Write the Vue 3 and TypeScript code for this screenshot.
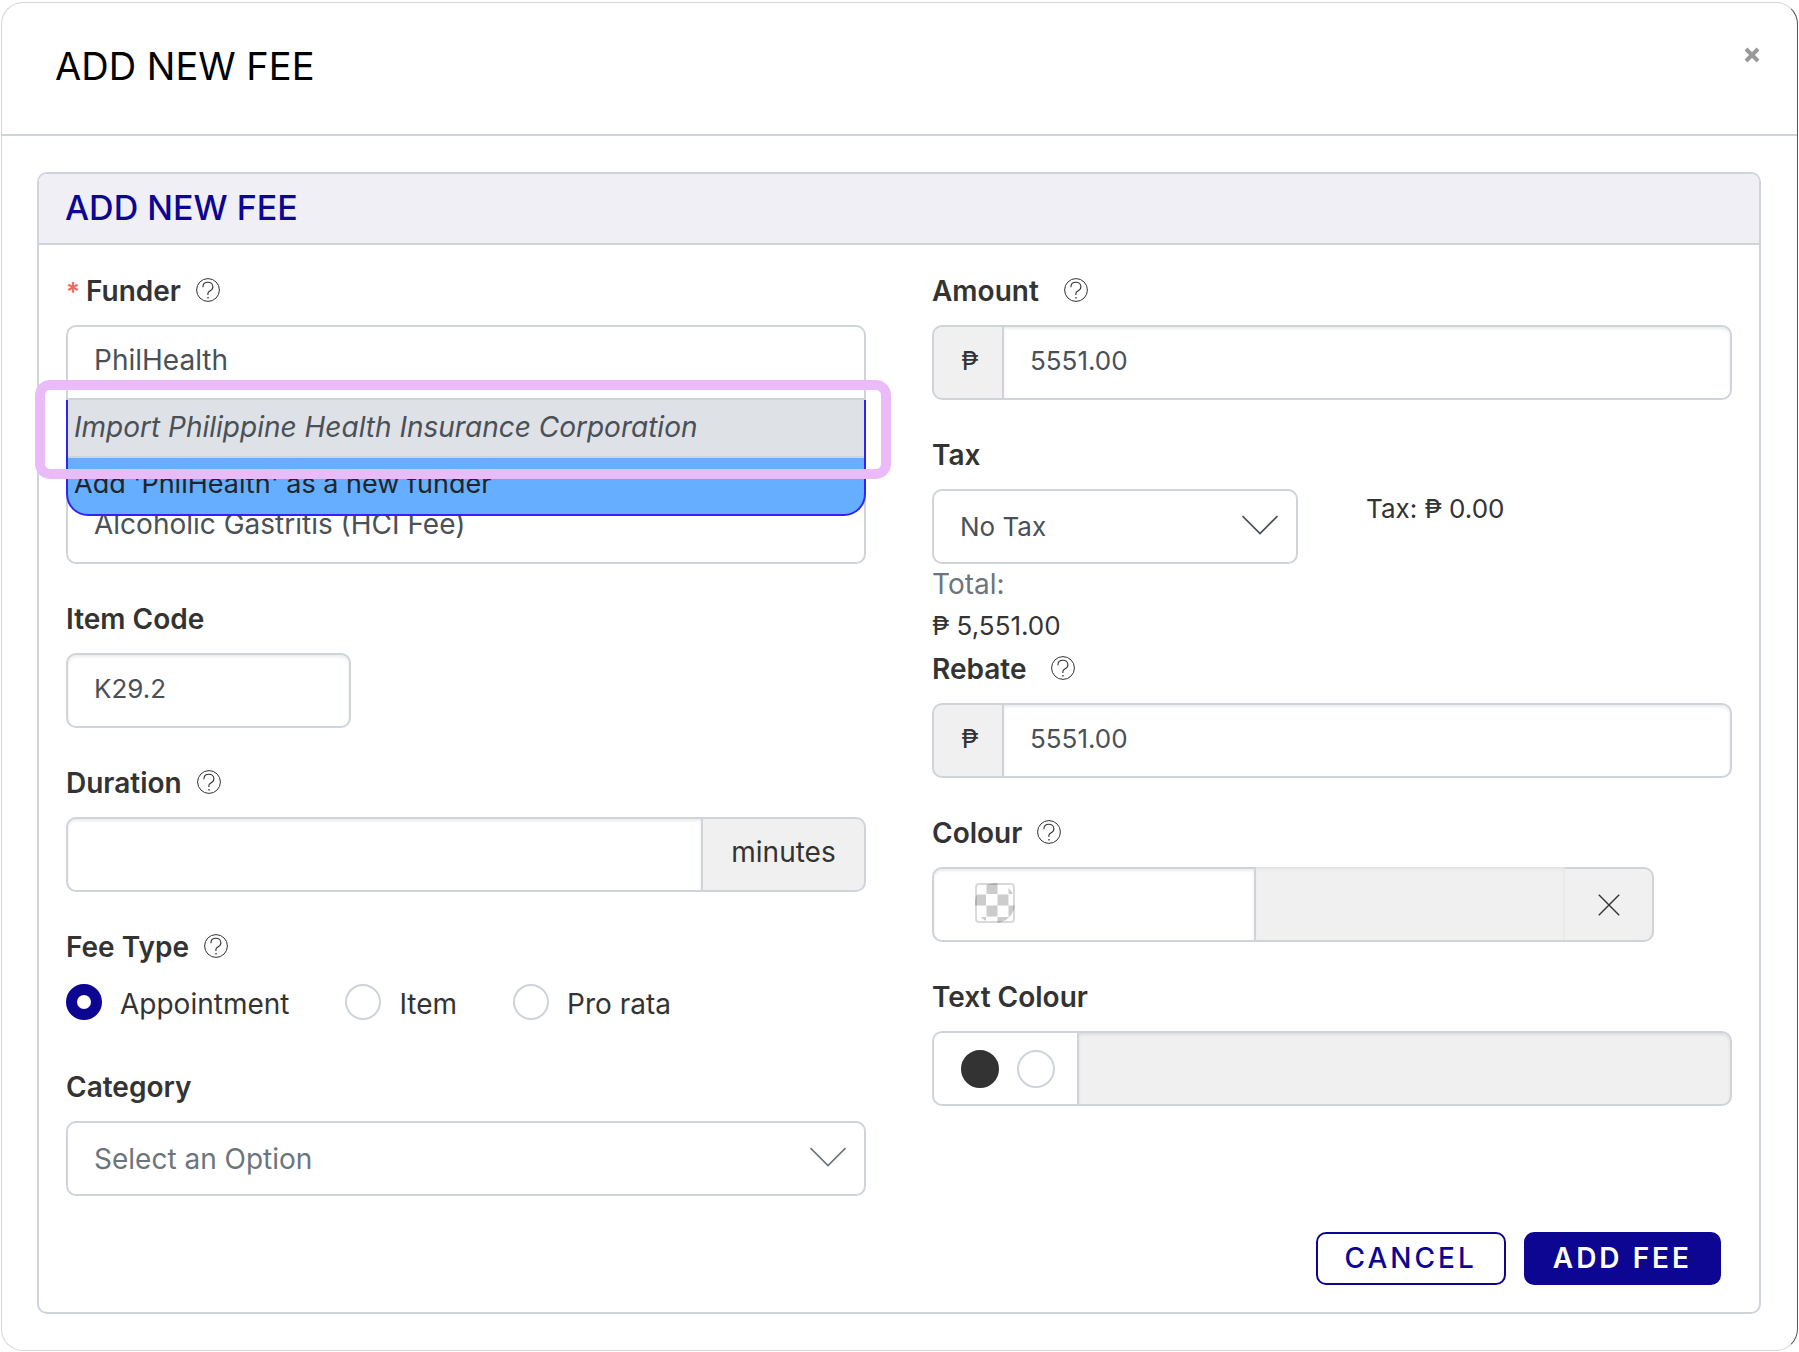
<script setup lang="ts">
import { defineComponent, h, ref } from 'vue'

const HelpIcon = defineComponent({
  props: { topic: { type: String, required: true } },
  setup(props) {
    return () =>
      h('svg', { width: 24, height: 24, viewBox: '0 0 24 24', fill: 'none', stroke: '#333', role: 'img', 'aria-label': 'Help: ' + props.topic }, [
        h('circle', { cx: 12, cy: 12, r: 11.4, 'stroke-width': 1 }),
        h('path', { d: 'M6.9 9.2C6.9 6.100 9 4.300 11.900 4.300c2.800 0 5 1.800 5 4.500 0 2.300-1.400 3.400-3 4.300-1.300.7-2 1.200-2 2.500v1.400', 'stroke-width': 1.1 }),
        h('path', { d: 'M12 19v1.600', 'stroke-width': 1.3 }),
      ])
  },
})

const funder = ref('PhilHealth')
const item = ref('Alcoholic Gastritis (HCI Fee)')
const itemCode = ref('K29.2')
const duration = ref('')
const feeTypes = ['Appointment', 'Item', 'Pro rata']
const feeType = ref('Appointment')
const category = ref('')
const amount = ref('5551.00')
const tax = ref('none')
const rebate = ref('5551.00')
const textColour = ref('dark')
</script>

<template>
  <div class="page">
    <main class="modal">
      <header class="modal-head">
        <h1>ADD NEW FEE</h1>
        <button class="close" type="button" aria-label="Close">
          <svg width="16" height="16" viewBox="0 0 16 16"><path d="M2 2l12 12M14 2L2 14" stroke="#999" stroke-width="4" /></svg>
        </button>
      </header>

      <form class="card" @submit.prevent>
        <h2>ADD NEW FEE</h2>
        <div class="card-body">
          <div class="columns">
            <div class="column">
              <div class="group combo">
                <div class="label-row">
                  <span class="required">*</span>
                  <label for="funder">Funder</label>
                  <HelpIcon class="help" topic="Funder" />
                </div>
                <input id="funder" v-model="funder" class="box flat open" type="text" autocomplete="off" />
                <div class="menu">
                  <button type="button" class="option import">Import Philippine Health Insurance Corporation</button>
                  <button type="button" class="option add">Add '{{ funder }}' as a new funder</button>
                  <div class="highlight"></div>
                </div>
              </div>

              <div class="group covered">
                <input v-model="item" class="box flat" type="text" aria-label="Item" />
              </div>

              <div class="group">
                <div class="label-row"><label for="code">Item Code</label></div>
                <input id="code" v-model="itemCode" class="box short figures" type="text" />
              </div>

              <div class="group">
                <div class="label-row">
                  <label for="duration">Duration</label>
                  <HelpIcon class="help" topic="Duration" />
                </div>
                <div class="joined">
                  <input id="duration" v-model="duration" class="box" type="text" />
                  <span class="addon minutes">minutes</span>
                </div>
              </div>

              <fieldset class="group">
                <legend class="label-row">
                  <span>Fee Type</span>
                  <HelpIcon class="help" topic="Fee Type" />
                </legend>
                <div class="radios">
                  <label v-for="type in feeTypes" :key="type" class="radio">
                    <input v-model="feeType" type="radio" name="fee-type" :value="type" />
                    <span>{{ type }}</span>
                  </label>
                </div>
              </fieldset>

              <div class="group">
                <div class="label-row"><label for="category">Category</label></div>
                <div class="picker muted">
                  <select id="category" v-model="category" class="box flat">
                    <option value="">Select an Option</option>
                  </select>
                  <svg class="chevron" width="36" height="20" viewBox="0 0 36 20" fill="none" stroke="currentColor" stroke-width="1.700"><path d="M.5 1L18 18.500 35.500 1" /></svg>
                </div>
              </div>
            </div>

            <div class="column">
              <div class="group">
                <div class="label-row wide">
                  <label for="amount">Amount</label>
                  <HelpIcon class="help" topic="Amount" />
                </div>
                <div class="joined">
                  <span class="addon peso figures">₱</span>
                  <input id="amount" v-model="amount" class="box figures" type="text" />
                </div>
              </div>

              <div class="group tax">
                <div class="label-row"><label for="tax">Tax</label></div>
                <div class="tax-row">
                  <div class="picker">
                    <select id="tax" v-model="tax" class="box flat figures">
                      <option value="none">No Tax</option>
                    </select>
                    <svg class="chevron" width="36" height="20" viewBox="0 0 36 20" fill="none" stroke="currentColor" stroke-width="1.700"><path d="M.5 1L18 18.500 35.500 1" /></svg>
                  </div>
                  <span class="tax-value figures">Tax: ₱ 0.00</span>
                </div>
                <div class="total-label">Total:</div>
                <div class="total figures">₱ 5,551.00</div>
              </div>

              <div class="group">
                <div class="label-row wide">
                  <label for="rebate">Rebate</label>
                  <HelpIcon class="help" topic="Rebate" />
                </div>
                <div class="joined">
                  <span class="addon peso figures">₱</span>
                  <input id="rebate" v-model="rebate" class="box figures" type="text" />
                </div>
              </div>

              <div class="group">
                <div class="label-row">
                  <span>Colour</span>
                  <HelpIcon class="help" topic="Colour" />
                </div>
                <div class="joined colour">
                  <button type="button" class="box swatch" aria-label="Pick a colour">
                    <svg width="40" height="40" viewBox="0 0 40 40">
                      <clipPath id="disc"><circle cx="20" cy="20" r="20" /></clipPath>
                      <g fill="#ccc" clip-path="url(#disc)">
                        <path d="M11.500 0h11v11h-11zM0 11.500h11v11H0zM22.500 11.500h11v11h-11zM11.500 22.500h11v11h-11zM33.500 0H40v11h-6.500zM33.500 22.500H40V34h-6.500zM0 34h11v6H0zM22.500 34h11v6h-11z" />
                      </g>
                      <rect x="1" y="1" width="38" height="38" rx="3" fill="none" stroke="#000" stroke-opacity=".15" stroke-width="2" />
                    </svg>
                  </button>
                  <span class="preview"></span>
                  <button type="button" class="addon clear" aria-label="Clear colour">
                    <svg width="22" height="22" viewBox="0 0 22 22" stroke="#333" stroke-width="1.400"><path d="M.8.8l20.400 20.400M21.200.8L.8 21.200" /></svg>
                  </button>
                </div>
              </div>

              <div class="group">
                <div class="label-row"><span>Text Colour</span></div>
                <div class="joined">
                  <span class="tones">
                    <input v-model="textColour" class="tone dark" type="radio" name="tone" value="dark" aria-label="Dark text" />
                    <input v-model="textColour" class="tone" type="radio" name="tone" value="light" aria-label="Light text" />
                  </span>
                  <input class="box disabled" type="text" disabled aria-label="Text colour preview" />
                </div>
              </div>
            </div>
          </div>

          <div class="actions">
            <button type="button" class="btn">CANCEL</button>
            <button type="submit" class="btn primary">ADD FEE</button>
          </div>
        </div>
      </form>
    </main>
  </div>
</template>

<style>
body {
  background: #fff;
}
</style>

<style scoped>
* {
  box-sizing: border-box;
}
.page {
  padding: 2px 1px 1px;
  color: #333;
  font: 400 28px/42px Inter, "Liberation Sans", sans-serif;
}
.modal {
  border: 1px solid #d5d7d9;
  border-right-color: #555;
  border-radius: 22px;
  padding-bottom: 36px;
}
.modal-head {
  display: flex;
  justify-content: space-between;
  align-items: flex-start;
  height: 133px;
  padding: 40px 37px 0 53px;
  border-bottom: 2px solid #ced4da;
}
h1,
h2 {
  margin: 0;
  font-weight: 400;
}
h1 {
  color: #000;
  font-size: 38px;
  line-height: 46px;
}
button {
  font: inherit;
  color: inherit;
  cursor: pointer;
}
.close {
  display: flex;
  margin-top: 4px;
  padding: 0;
  border: 0;
  background: none;
}
.card {
  margin: 36px 36px 0 35px;
  border: 2px solid #ced4da;
  border-radius: 10px;
}
h2 {
  height: 71px;
  padding: 0 26px;
  border-bottom: 2px solid #ced4da;
  border-radius: 8px 8px 0 0;
  background: #f0eff5;
  color: #0d0692;
  font-size: 34px;
  font-weight: 500;
  line-height: 68px;
}
.card-body {
  padding: 25px 27px 27px;
}
.columns {
  display: grid;
  grid-template-columns: 1fr 1fr;
  gap: 66px;
}
.column {
  display: flex;
  flex-direction: column;
  gap: 34px;
}
.group {
  min-width: 0;
  margin: 0;
  padding: 0;
  border: 0;
}
.combo {
  position: relative;
}
.covered {
  margin-top: 55px;
}
.tax {
  margin-bottom: -34px;
}
.label-row {
  display: flex;
  align-items: flex-start;
  height: 42px;
  margin-bottom: 13px;
  padding: 0;
  font-weight: 600;
  line-height: 43px;
}
.help {
  flex: none;
  margin: 8px 0 0 15px;
}
.wide .help {
  margin-left: 25px;
}
.required {
  margin-right: 6px;
  color: #ee6a60;
  font-size: 26px;
}
.box {
  display: block;
  width: 100%;
  height: 75px;
  margin: 0;
  padding: 0 26px 5px;
  border: 2px solid #ced4da;
  border-radius: 10px;
  background: #fff;
  box-shadow: inset 0 2px 3px rgba(0, 0, 0, 0.08);
  color: #495057;
  font: inherit;
}
.box.figures,
.figures {
  font-size: 26px;
}
.flat {
  box-shadow: none;
}
.open {
  border-radius: 10px 10px 0 0;
}
.short {
  width: 285px;
}
.joined {
  display: flex;
}
.joined > .box:first-child {
  border-radius: 10px 0 0 10px;
}
.joined > .box:last-child {
  border-radius: 0 10px 10px 0;
}
.joined > .box {
  flex: 1;
  min-width: 0;
}
.addon {
  flex: none;
  height: 75px;
  padding-bottom: 5px;
  border: 2px solid #ced4da;
  background: #f0f0f0;
  line-height: 67px;
  text-align: center;
}
.peso {
  width: 70px;
  padding-left: 4px;
  border-right: 0;
  border-radius: 10px 0 0 10px;
}
.minutes {
  width: 163px;
  border-left: 0;
  border-radius: 0 10px 10px 0;
}
.menu {
  position: absolute;
  z-index: 1;
  top: 130px;
  left: 0;
  right: 0;
}
.option {
  display: block;
  width: 100%;
  height: 58px;
  padding: 0 6px 4px;
  border: 0 solid #2f24f5;
  border-width: 0 2px;
  text-align: left;
}
.import {
  background: #dee1e6;
  box-shadow: inset 0 -2px #ced4da;
  color: #495057;
  font-style: italic;
}
.add {
  border-bottom-width: 2px;
  border-radius: 0 0 22px 22px;
  background: #66aeff;
  color: #212529;
  font-size: 27px;
}
.highlight {
  position: absolute;
  top: -20px;
  left: -31px;
  right: -25px;
  height: 99px;
  border: 10px solid #ebbbf9;
  border-radius: 15px;
  pointer-events: none;
}
.radios {
  display: flex;
  gap: 56px;
  height: 51px;
}
.radio {
  display: flex;
  align-items: flex-start;
  gap: 18px;
  line-height: 47px;
}
.radio input {
  appearance: none;
  width: 36px;
  height: 36px;
  margin: 3px 0 0;
  border: 2px solid #ced4da;
  border-radius: 50%;
  background: #fff;
}
.radio input:checked {
  border: 11px solid #0d0692;
}
.picker {
  position: relative;
  color: #495057;
}
.picker .box {
  appearance: none;
  padding-bottom: 0;
  color: inherit;
}
.muted {
  color: #6c757d;
}
.chevron {
  position: absolute;
  top: 26px;
  right: 20px;
  pointer-events: none;
}
.tax-row {
  display: flex;
  gap: 68px;
}
.tax-row .picker {
  width: 366px;
}
.tax-value {
  line-height: 40px;
}
.total-label {
  color: #6c757d;
  line-height: 40px;
}
.total {
  line-height: 44px;
}
.colour {
  margin-right: 78px;
}
.joined > .swatch {
  flex: 0 0 324px;
  padding: 0 0 4px 41px;
  text-align: left;
}
.swatch svg {
  display: block;
}
.preview {
  flex: 1;
  height: 75px;
  border-bottom: 2px solid #ced4da;
  background: #f0f0f0;
  box-shadow: inset -1px 2px 3px rgba(0, 0, 0, 0.06);
}
.clear {
  display: flex;
  align-items: center;
  justify-content: center;
  width: 89px;
  padding: 0;
  border-left: 0;
  border-radius: 0 10px 10px 0;
}
.tones {
  display: flex;
  gap: 18px;
  height: 75px;
  padding: 17px 22px 0 27px;
  border: 2px solid #ced4da;
  border-right: 0;
  border-radius: 10px 0 0 10px;
}
.tone {
  appearance: none;
  width: 38px;
  height: 38px;
  margin: 0;
  border: 2px solid #ced4da;
  border-radius: 50%;
}
.dark {
  border-color: #333;
  background: #333;
}
.disabled {
  background: #f0f0f0;
}
.actions {
  display: flex;
  justify-content: flex-end;
  gap: 18px;
  margin-top: 36px;
  padding-right: 11px;
}
.btn {
  height: 53px;
  padding: 0 27px;
  border: 2px solid #0d0692;
  border-radius: 10px;
  background: #fff;
  color: #0d0692;
  font-weight: 500;
  line-height: 49px;
  letter-spacing: 3px;
}
.primary {
  background: #0d0692;
  color: #fff;
  font-weight: 600;
}
</style>
